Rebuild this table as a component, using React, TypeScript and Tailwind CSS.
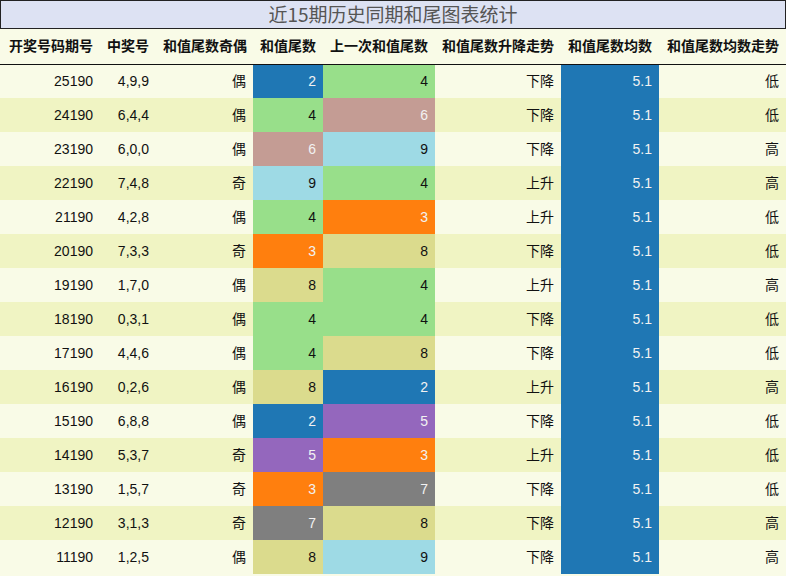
const rows: [string, string, string, number, number, string, string][] = [
  ["25190", "4,9,9", "偶", 2, 4, "下降", "低"],
  ["24190", "6,4,4", "偶", 4, 6, "下降", "低"],
  ["23190", "6,0,0", "偶", 6, 9, "下降", "高"],
  ["22190", "7,4,8", "奇", 9, 4, "上升", "高"],
  ["21190", "4,2,8", "偶", 4, 3, "上升", "低"],
  ["20190", "7,3,3", "奇", 3, 8, "下降", "低"],
  ["19190", "1,7,0", "偶", 8, 4, "上升", "高"],
  ["18190", "0,3,1", "偶", 4, 4, "下降", "低"],
  ["17190", "4,4,6", "偶", 4, 8, "下降", "低"],
  ["16190", "0,2,6", "偶", 8, 2, "上升", "高"],
  ["15190", "6,8,8", "偶", 2, 5, "下降", "低"],
  ["14190", "5,3,7", "奇", 5, 3, "上升", "低"],
  ["13190", "1,5,7", "奇", 3, 7, "下降", "低"],
  ["12190", "3,1,3", "奇", 7, 8, "下降", "高"],
  ["11190", "1,2,5", "偶", 8, 9, "下降", "高"],
];

// tab20-style palette per tail digit
const tail: Record<number, string> = {
  2: "bg-[#1f77b4] text-[#f2f2f2]",
  3: "bg-[#ff7f0e] text-[#f2f2f2]",
  4: "bg-[#98df8a] text-[#111]",
  5: "bg-[#9467bd] text-[#f2f2f2]",
  6: "bg-[#c49c94] text-[#f2f2f2]",
  7: "bg-[#7f7f7f] text-[#f2f2f2]",
  8: "bg-[#dbdb8d] text-[#111]",
  9: "bg-[#9edae5] text-[#111]",
};

const headers = ["开奖号码期号", "中奖号", "和值尾数奇偶", "和值尾数", "上一次和值尾数", "和值尾数升降走势", "和值尾数均数", "和值尾数均数走势"];
const widths = ["w-[100px]", "w-[56px]", "w-[97px]", "w-[70px]", "w-[112px]", "w-[126px]", "w-[98px]", "w-[127px]"];

export default function App() {
  return (
    <div className="w-[786px] h-[576px] overflow-hidden bg-[#f9fbe7] font-['Liberation_Sans','Noto_Sans_CJK_SC',sans-serif] text-[14px] text-[#111]">
      <div className="h-[29px] border border-[#222] bg-[#dde2f3] flex items-center justify-center text-[19px] text-[#555] font-['Noto_Sans_CJK_SC',sans-serif]">
        近15期历史同期和尾图表统计
      </div>
      <table className="table-fixed border-collapse w-[786px]">
        <colgroup>
          {widths.map((w, i) => (
            <col key={i} className={w} />
          ))}
        </colgroup>
        <thead>
          <tr className="h-[35px] border-b border-[#111] bg-[#f9fbe7]">
            {headers.map((h) => (
              <th key={h} className="px-[7px] text-right font-bold whitespace-nowrap">
                {h}
              </th>
            ))}
          </tr>
        </thead>
        <tbody>
          {rows.map((r, i) => (
            <tr key={r[0]} className={`h-[34px] ${i % 2 === 0 ? "bg-[#f9fbe7]" : "bg-[#f0f4c3]"}`}>
              <td className="px-[7px] text-right">{r[0]}</td>
              <td className="px-[7px] text-right">{r[1]}</td>
              <td className="px-[7px] text-right">{r[2]}</td>
              <td className={`px-[7px] text-right ${tail[r[3]]}`}>{r[3]}</td>
              <td className={`px-[7px] text-right ${tail[r[4]]}`}>{r[4]}</td>
              <td className="px-[7px] text-right">{r[5]}</td>
              <td className="px-[7px] text-right bg-[#1f77b4] text-[#f2f2f2]">5.1</td>
              <td className="px-[7px] text-right">{r[6]}</td>
            </tr>
          ))}
        </tbody>
      </table>
    </div>
  );
}
